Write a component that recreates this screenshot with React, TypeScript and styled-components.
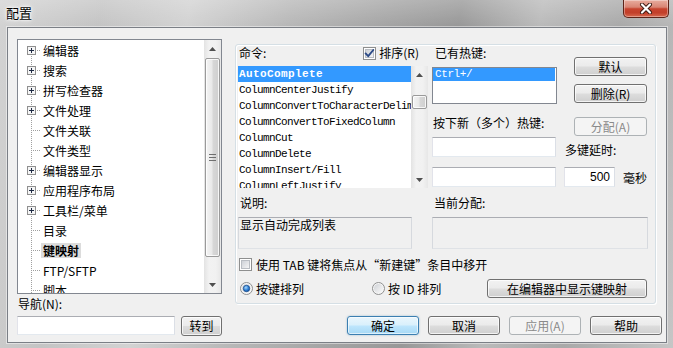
import React from "react";
import styled, { createGlobalStyle, css } from "styled-components";

const CJK = `"Noto Sans CJK SC", "Liberation Sans", sans-serif`;
const MONO = `"Liberation Mono", "DejaVu Sans Mono", monospace`;

const Global = createGlobalStyle`
  html, body { margin: 0; padding: 0; overflow: hidden; background: #b8b8b8; }
  body { font-family: ${CJK}; font-size: 12px; color: #000; }
  * { box-sizing: border-box; }
`;

const Window = styled.div`
  width: 673px;
  height: 348px;
  display: flex;
  flex-direction: column;
  background:
    linear-gradient(180deg, rgba(255, 255, 255, 0.22) 0px, rgba(255, 255, 255, 0) 26px),
    linear-gradient(100deg, #d3d3d3 0%, #c4c4c4 14%, #d2d2d2 26%, #b7b7b7 40%, #a3a3a3 54%, #989898 63%, #bababa 74%, #a9a9a9 85%, #c6c6c6 100%);
`;

const TitleBar = styled.div`
  height: 27px;
  flex-shrink: 0;
  display: flex;
  align-items: flex-start;
`;

const Title = styled.div`
  margin: 5px 0 0 6px;
  font-size: 13px;
  line-height: 15px;
  color: #000;
  text-shadow: 0 0 6px #fff, 0 0 3px #fff, 0 0 2px #fff;
`;

const CloseButton = styled.div`
  margin-left: auto;
  margin-right: 4px;
  width: 46px;
  height: 18px;
  border: 1px solid #5e2419;
  border-top: none;
  border-radius: 0 0 5px 5px;
  background: linear-gradient(180deg, #e8ac9e 0%, #d98574 42%, #c7432e 52%, #c23f2a 75%, #d7694f 100%);
  box-shadow: inset 0 0 0 1px rgba(255, 255, 255, 0.35);
  display: flex;
  align-items: center;
  justify-content: center;
`;

const Client = styled.div`
  flex: 1;
  margin: 0 6px 5px 7px;
  border: 1px solid #7b7f86;
  box-shadow: 0 0 0 1px rgba(255, 255, 255, 0.45);
  background: #f0f0f0;
  display: flex;
  padding: 11px 0 0 9px;
`;

const LeftCol = styled.div`
  width: 205px;
  display: flex;
  flex-direction: column;
`;

const TreeBox = styled.div`
  height: 255px;
  border: 1px solid #828790;
  background: #fff;
  display: flex;
  overflow: hidden;
`;

const TreeRows = styled.div`
  flex: 1;
  overflow: hidden;
`;

const dotsV = `repeating-linear-gradient(180deg, #a0a0a0 0 1px, transparent 1px 2px)`;
const dotsH = `repeating-linear-gradient(90deg, #a0a0a0 0 1px, transparent 1px 2px)`;

const TreeRow = styled.div<{ $first?: boolean; $plus?: boolean }>`
  position: relative;
  height: 20px;
  display: flex;
  align-items: center;
  padding-left: 25px;
  white-space: nowrap;
  &::before {
    content: "";
    position: absolute;
    left: 13px;
    top: ${(p) => (p.$first ? "10px" : "0")};
    bottom: 0;
    width: 1px;
    background: ${dotsV};
  }
  &::after {
    content: "";
    position: absolute;
    left: ${(p) => (p.$plus ? "19px" : "15px")};
    width: ${(p) => (p.$plus ? "4px" : "8px")};
    top: 10px;
    height: 1px;
    background: ${dotsH};
  }
`;

const PlusBox = styled.span`
  position: absolute;
  left: 9px;
  top: 6px;
  width: 9px;
  height: 9px;
  display: block;
  z-index: 1;
  line-height: 0;
`;

const TreeLabel = styled.span<{ $selected?: boolean }>`
  font-size: 12px;
  line-height: 15px;
  margin-left: -2px;
  padding: 0 2px;
  ${(p) =>
    p.$selected &&
    css`
      font-weight: 700;
      background: #dcdcdc;
    `}
`;

const ScrollBar = styled.div`
  width: 17px;
  flex-shrink: 0;
  display: flex;
  flex-direction: column;
  background: linear-gradient(90deg, #e3e3e3 0%, #f2f2f2 30%, #f1f1f1 70%, #e7e7e7 100%);
`;

const ArrowBtn = styled.div`
  height: 17px;
  flex-shrink: 0;
  display: flex;
  align-items: center;
  justify-content: center;
`;

const Track = styled.div<{ $pad: number }>`
  flex: 1;
  padding-top: ${(p) => p.$pad}px;
`;

const Thumb = styled.div<{ $h: number }>`
  height: ${(p) => p.$h}px;
  margin: 0 1px 0 1px;
  border: 1px solid #9a9a9a;
  border-radius: 2px;
  background: linear-gradient(90deg, #f4f4f4 0%, #e9e9e9 45%, #d7d7d7 55%, #cfcfcf 100%);
  box-shadow: inset 0 0 0 1px rgba(255, 255, 255, 0.8);
  display: flex;
  align-items: center;
  justify-content: center;
`;

const NavLabel = styled.div`
  margin-top: 3px;
  line-height: 14px;
  height: 14px;
  padding-left: 1px;
`;

const NavRow = styled.div`
  margin-top: 5px;
  display: flex;
  gap: 6px;
  align-items: flex-start;
`;

const TextInput = styled.div<{ $w: number; $h?: number; $right?: boolean }>`
  width: ${(p) => p.$w}px;
  height: ${(p) => p.$h ?? 20}px;
  background: #fff;
  border: 1px solid;
  border-color: #abadb3 #dbdfe6 #e3e9ef #e2e3ea;
  font-family: "Liberation Sans", ${CJK};
  font-size: 12px;
  line-height: 18px;
  padding: 0 4px;
  text-align: ${(p) => (p.$right ? "right" : "left")};
`;

const Button = styled.div<{ $w: number; $h?: number; $primary?: boolean; $disabled?: boolean }>`
  width: ${(p) => p.$w}px;
  height: ${(p) => p.$h ?? 19}px;
  flex-shrink: 0;
  border: 1px solid #707070;
  border-radius: 3px;
  background: linear-gradient(180deg, #f2f2f2 0%, #ebebeb 48%, #dddddd 52%, #cfcfcf 100%);
  box-shadow: inset 0 0 0 1px rgba(255, 255, 255, 0.75);
  display: flex;
  align-items: center;
  justify-content: center;
  font-size: 12px;
  line-height: 14px;
  color: #000;
  white-space: nowrap;
  ${(p) =>
    p.$primary &&
    css`
      border-color: #3c7fb1;
      background: linear-gradient(180deg, #eaf6fd 0%, #d9f0fc 48%, #bee6fd 52%, #a7d9f5 100%);
      box-shadow: inset 0 0 0 1px rgba(255, 255, 255, 0.6), 0 0 2px rgba(60, 127, 177, 0.5);
    `}
  ${(p) =>
    p.$disabled &&
    css`
      border-color: #adb2b5;
      background: #f4f4f4;
      box-shadow: none;
      color: #8a8a8a;
    `}
`;

const RightCol = styled.div`
  margin-left: 13px;
  width: 427px;
  display: flex;
  flex-direction: column;
`;

const Panel = styled.div`
  margin-top: 5px;
  width: 421px;
  height: 260px;
  border: 1px solid #d5dfe5;
  border-radius: 3px;
  box-shadow: inset 1px 1px 0 #fff, 1px 1px 0 #fff;
  padding: 1px 0 0 2px;
  display: flex;
  flex-direction: column;
`;

const TopSection = styled.div`
  display: flex;
`;

const CmdCol = styled.div`
  width: 190px;
  display: flex;
  flex-direction: column;
`;

const Header = styled.div`
  height: 14px;
  display: flex;
  align-items: center;
  justify-content: space-between;
  padding: 0 9px 0 1px;
`;

const Label = styled.div<{ $pl?: number }>`
  line-height: 14px;
  height: 14px;
  white-space: nowrap;
  padding-left: ${(p) => p.$pl ?? 0}px;
`;

const CheckGroup = styled.div`
  display: flex;
  align-items: center;
  gap: 3px;
  line-height: 14px;
`;

const CmdList = styled.div`
  margin-top: 6px;
  height: 122px;
  background: #fff;
  display: flex;
  overflow: hidden;
`;

const ListItems = styled.div`
  flex: 1;
  overflow: hidden;
`;

const CmdItem = styled.div<{ $sel?: boolean }>`
  height: 16px;
  line-height: 16px;
  padding-left: 1px;
  font-family: ${MONO};
  font-size: 11px;
  letter-spacing: -0.6px;
  white-space: nowrap;
  overflow: hidden;
  color: #000;
  ${(p) =>
    p.$sel &&
    css`
      background: #3399ff;
      color: #fff;
      font-weight: 700;
      letter-spacing: 0.4px;
    `}
`;

const HotCol = styled.div`
  margin-left: 4px;
  display: flex;
`;

const HotLeft = styled.div`
  width: 125px;
  display: flex;
  flex-direction: column;
`;

const HotList = styled.div`
  margin-top: 7px;
  height: 37px;
  border: 1px solid #828790;
  background: #fff;
`;

const HotItem = styled.div`
  height: 13px;
  line-height: 13px;
  margin-right: 1px;
  padding-left: 2px;
  background: #3399ff;
  color: #fff;
  font-family: ${MONO};
  font-size: 11px;
  letter-spacing: -0.4px;
`;

const HotRight = styled.div`
  margin-left: 7px;
  width: 84px;
  display: flex;
  flex-direction: column;
`;

const Spacer = styled.div<{ $h: number }>`
  height: ${(p) => p.$h}px;
  flex-shrink: 0;
`;

const SideButton = styled(Button)`
  margin-left: 10px;
`;

const DelayRow = styled.div`
  display: flex;
  align-items: center;
  gap: 8px;
`;

const DescRow = styled.div`
  margin-top: 8px;
  display: flex;
`;

const DescCol = styled.div<{ $w: number; $ml?: number }>`
  width: ${(p) => p.$w}px;
  margin-left: ${(p) => p.$ml ?? 0}px;
  display: flex;
  flex-direction: column;
`;

const ReadBox = styled.div`
  margin-top: 7px;
  height: 32px;
  border: 1px solid;
  border-color: #abadb3 #d6d9de #dfe2e6 #d6d9de;
  background: #f0f0f0;
  padding-left: 1px;
  line-height: 14px;
  white-space: nowrap;
`;

const CheckRow = styled.div`
  margin-top: 9px;
  height: 13px;
  display: flex;
  align-items: center;
  gap: 4px;
  padding-left: 1px;
  line-height: 14px;
  white-space: nowrap;
`;

const RadioRow = styled.div`
  margin-top: 8px;
  height: 19px;
  display: flex;
  align-items: center;
  padding-left: 2px;
`;

const RadioItem = styled.div<{ $w: number }>`
  width: ${(p) => p.$w}px;
  display: flex;
  align-items: center;
  gap: 3px;
  line-height: 14px;
  white-space: nowrap;
`;

const ButtonRow = styled.div`
  margin-top: 12px;
  display: flex;
  justify-content: flex-end;
  gap: 9px;
`;

const CheckBoxFrame = styled.span`
  width: 13px;
  height: 13px;
  flex-shrink: 0;
  display: block;
  line-height: 0;
`;

function CheckBox({ checked }: { checked?: boolean }) {
  return (
    <CheckBoxFrame>
      <svg width="13" height="13" viewBox="0 0 13 13">
        <defs>
          <linearGradient id="cbg" x1="0" y1="0" x2="1" y2="1">
            <stop offset="0" stopColor="#cbcfd5" />
            <stop offset="1" stopColor="#f7f7f7" />
          </linearGradient>
        </defs>
        <rect x="0.5" y="0.5" width="12" height="12" fill="#fff" stroke="#8e8f8f" />
        <rect x="2.5" y="2.5" width="8" height="8" fill="url(#cbg)" stroke="#b9bdc3" strokeWidth="1" />
        {checked && (
          <path d="M2.6 6.4 L5.2 9.2 L10.3 3" fill="none" stroke="#2c4a86" strokeWidth="1.9" strokeLinecap="round" strokeLinejoin="round" />
        )}
      </svg>
    </CheckBoxFrame>
  );
}

function Radio({ checked }: { checked?: boolean }) {
  return (
    <CheckBoxFrame>
      <svg width="13" height="13" viewBox="0 0 13 13">
        <defs>
          <linearGradient id="rbg" x1="0" y1="0" x2="1" y2="1">
            <stop offset="0" stopColor="#cfd2d6" />
            <stop offset="1" stopColor="#fbfbfb" />
          </linearGradient>
          <radialGradient id="rdot" cx="0.4" cy="0.35" r="0.75">
            <stop offset="0" stopColor="#a6d8fc" />
            <stop offset="0.55" stopColor="#2f80d6" />
            <stop offset="1" stopColor="#0f4a94" />
          </radialGradient>
        </defs>
        <circle cx="6.5" cy="6.5" r="6" fill="#f6f6f6" stroke="#8e8f8f" />
        <circle cx="6.5" cy="6.5" r="4.6" fill="url(#rbg)" />
        {checked && <circle cx="6.5" cy="6.5" r="3.2" fill="url(#rdot)" stroke="#1b4d8c" strokeWidth="0.8" />}
      </svg>
    </CheckBoxFrame>
  );
}

function Arrow({ down }: { down?: boolean }) {
  return (
    <svg width="7" height="4" viewBox="0 0 7 4">
      <polygon points={down ? "0,0 7,0 3.5,4" : "0,4 7,4 3.5,0"} fill="#4f4f4f" />
    </svg>
  );
}

function VScroll({ pad, thumb, grip }: { pad: number; thumb: number; grip?: boolean }) {
  return (
    <ScrollBar>
      <ArrowBtn>
        <Arrow />
      </ArrowBtn>
      <Track $pad={pad}>
        <Thumb $h={thumb}>
          {grip && (
            <svg width="7" height="7" viewBox="0 0 7 7">
              <path d="M0 0.5h7M0 3.5h7M0 6.5h7" stroke="#6f6f6f" />
            </svg>
          )}
        </Thumb>
      </Track>
      <ArrowBtn>
        <Arrow down />
      </ArrowBtn>
    </ScrollBar>
  );
}

const treeItems: { label: string; plus?: boolean; selected?: boolean }[] = [
  { label: "编辑器", plus: true },
  { label: "搜索", plus: true },
  { label: "拼写检查器", plus: true },
  { label: "文件处理", plus: true },
  { label: "文件关联" },
  { label: "文件类型" },
  { label: "编辑器显示", plus: true },
  { label: "应用程序布局", plus: true },
  { label: "工具栏/菜单", plus: true },
  { label: "目录" },
  { label: "键映射", selected: true },
  { label: "FTP/SFTP" },
  { label: "脚本" },
];

const commands = [
  "AutoComplete",
  "ColumnCenterJustify",
  "ColumnConvertToCharacterDelimited",
  "ColumnConvertToFixedColumn",
  "ColumnCut",
  "ColumnDelete",
  "ColumnInsert/Fill",
  "ColumnLeftJustify",
];

export default function App() {
  return (
    <>
      <Global />
      <Window>
        <TitleBar>
          <Title>配置</Title>
          <CloseButton>
            <svg width="14" height="11" viewBox="0 0 14 11">
              <path d="M3 1.5 L11 9.5 M11 1.5 L3 9.5" stroke="#3b1a12" strokeWidth="4" strokeLinecap="round" />
              <path d="M3 1.5 L11 9.5 M11 1.5 L3 9.5" stroke="#ffffff" strokeWidth="2.2" strokeLinecap="round" />
            </svg>
          </CloseButton>
        </TitleBar>
        <Client>
          <LeftCol>
            <TreeBox>
              <TreeRows>
                {treeItems.map((it, i) => (
                  <TreeRow key={it.label} $first={i === 0} $plus={it.plus}>
                    {it.plus && (
                      <PlusBox>
                        <svg width="9" height="9" viewBox="0 0 9 9">
                          <rect x="0.5" y="0.5" width="8" height="8" fill="#f5f5f5" stroke="#8f8f8f" />
                          <path d="M2 4.5h5M4.5 2v5" stroke="#1f2a44" />
                        </svg>
                      </PlusBox>
                    )}
                    <TreeLabel $selected={it.selected}>{it.label}</TreeLabel>
                  </TreeRow>
                ))}
              </TreeRows>
              <VScroll pad={1} thumb={199} grip />
            </TreeBox>
            <NavLabel>导航(N):</NavLabel>
            <NavRow>
              <TextInput $w={158} $h={19} />
              <Button $w={41} $h={20}>
                转到
              </Button>
            </NavRow>
          </LeftCol>
          <RightCol>
            <Panel>
              <TopSection>
                <CmdCol>
                  <Header>
                    <Label>命令:</Label>
                    <CheckGroup>
                      <CheckBox checked />
                      <span>排序(R)</span>
                    </CheckGroup>
                  </Header>
                  <CmdList>
                    <ListItems>
                      {commands.map((c, i) => (
                        <CmdItem key={c} $sel={i === 0}>
                          {c}
                        </CmdItem>
                      ))}
                    </ListItems>
                    <VScroll pad={12} thumb={14} />
                  </CmdList>
                </CmdCol>
                <HotCol>
                  <HotLeft>
                    <Label $pl={3}>已有热键:</Label>
                    <HotList>
                      <HotItem>Ctrl+/</HotItem>
                    </HotList>
                    <Spacer $h={12} />
                    <Label $pl={1}>按下新（多个）热键:</Label>
                    <Spacer $h={7} />
                    <TextInput $w={124} />
                    <Spacer $h={10} />
                    <TextInput $w={124} />
                  </HotLeft>
                  <HotRight>
                    <Spacer $h={11} />
                    <SideButton $w={73}>默认</SideButton>
                    <Spacer $h={8} />
                    <SideButton $w={73}>删除(R)</SideButton>
                    <Spacer $h={14} />
                    <SideButton $w={73} $disabled>
                      分配(A)
                    </SideButton>
                    <Spacer $h={7} />
                    <Label $pl={1}>多键延时:</Label>
                    <Spacer $h={10} />
                    <DelayRow>
                      <TextInput $w={51} $right>
                        500
                      </TextInput>
                      <span>毫秒</span>
                    </DelayRow>
                  </HotRight>
                </HotCol>
              </TopSection>
              <DescRow>
                <DescCol $w={174}>
                  <Label $pl={2}>说明:</Label>
                  <ReadBox>显示自动完成列表</ReadBox>
                </DescCol>
                <DescCol $w={216} $ml={20}>
                  <Label $pl={2}>当前分配:</Label>
                  <ReadBox />
                </DescCol>
              </DescRow>
              <CheckRow>
                <CheckBox />
                <span>使用 TAB 键将焦点从“新建键”条目中移开</span>
              </CheckRow>
              <RadioRow>
                <RadioItem $w={132}>
                  <Radio checked />
                  <span>按键排列</span>
                </RadioItem>
                <RadioItem $w={115}>
                  <Radio />
                  <span>按 ID 排列</span>
                </RadioItem>
                <Button $w={160}>在编辑器中显示键映射</Button>
              </RadioRow>
            </Panel>
            <ButtonRow>
              <Button $w={72} $primary>
                确定
              </Button>
              <Button $w={72}>取消</Button>
              <Button $w={72} $disabled>
                应用(A)
              </Button>
              <Button $w={72}>帮助</Button>
            </ButtonRow>
          </RightCol>
        </Client>
      </Window>
    </>
  );
}
